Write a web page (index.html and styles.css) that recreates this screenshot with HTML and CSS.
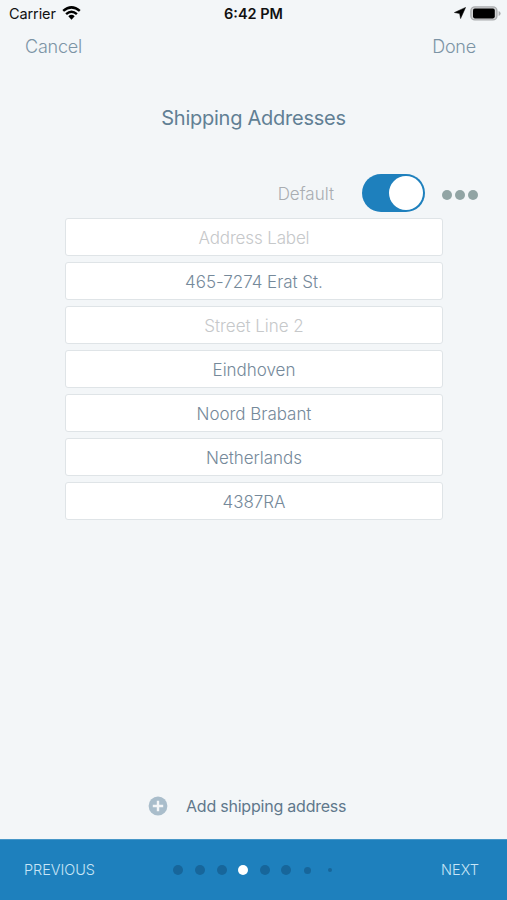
FILE: index.html
```html
<!DOCTYPE html>
<html lang="en">
<head>
<meta charset="utf-8">
<title>Shipping Addresses</title>
<link rel="stylesheet" href="styles.css">
</head>
<body>
<div class="screen">
  <div class="status">
    <div class="carrier"><span>Carrier</span>
      <svg width="19" height="14" viewBox="0 0 19 14"><g fill="none" stroke="#000" stroke-width="2.5"><path d="M1.2 4.9Q9.5-2.2 17.8 4.9"/><path d="M4.1 8.1Q9.5 3.4 14.9 8.1"/></g><path d="M6.3 10.2Q9.5 7.4 12.7 10.2L9.5 13.7Z"/></svg>
    </div>
    <div class="time">6:42 PM</div>
    <div class="indicators">
      <svg width="12" height="12" viewBox="0 0 12 12"><path d="M11.6.4 6.6 11.6 5.6 6.5.4 5.5Z" stroke="#000" stroke-width=".5" stroke-linejoin="round"/></svg>
      <svg width="31" height="15" viewBox="0 0 31 15"><rect x=".9" y=".9" width="26" height="13" rx="4" fill="#d0d1d2" stroke="#aaacae" stroke-width="1.4"/><rect x="3" y="2.6" width="21.8" height="9.8" rx="1.8"/><path d="M28.6 5Q30.6 5.7 30.6 7.5T28.6 10Z" fill="#aaacae"/></svg>
    </div>
  </div>
  <nav class="nav"><span class="cancel">Cancel</span><span class="done">Done</span></nav>
  <h1 class="title">Shipping Addresses</h1>
  <div class="default-row">
    <span class="default-label">Default</span>
    <div class="toggle"><i class="knob"></i></div>
    <div class="more"><i></i><i></i><i></i></div>
  </div>
  <div class="fields">
    <div class="field placeholder"><span class="label-text">Address Label</span></div>
    <div class="field"><span class="street">465-7274 Erat St.</span></div>
    <div class="field placeholder"><span class="line-two">Street Line 2</span></div>
    <div class="field"><span class="city">Eindhoven</span></div>
    <div class="field"><span class="region">Noord Brabant</span></div>
    <div class="field"><span class="country">Netherlands</span></div>
    <div class="field"><span class="postcode">4387RA</span></div>
  </div>
  <div class="add">
    <svg width="20" height="20" viewBox="0 0 20 20"><circle cx="10" cy="10" r="9.4" fill="#a9bdcb"/><path d="M10 4.8v10.4M4.8 10h10.4" stroke="#f4f6f8" stroke-width="2.4"/></svg>
    <span>Add shipping address</span>
  </div>
  <footer class="footer">
    <span class="previous">PREVIOUS</span>
    <div class="dots"><i></i><i></i><i></i><i class="active"></i><i></i><i></i><i class="small"></i><i class="tiny"></i></div>
    <span class="next">NEXT</span>
  </footer>
</div>
</body>
</html>
```
FILE: styles.css
```css
* { box-sizing: border-box; }
body { margin: 0; font-family: Inter, "Liberation Sans", sans-serif; background: #f3f6f8; }
svg { display: block; flex: none; }
.screen { width: 507px; height: 900px; display: flex; flex-direction: column; white-space: nowrap; overflow: hidden; }
.status { height: 28px; display: grid; grid-template-columns: 1fr auto 1fr; align-items: center; padding: 0 6px 2px 9px; color: #111; font-size: 14.5px; }
.carrier { display: flex; align-items: center; gap: 6px; letter-spacing: -.1px; }
.time { font-weight: 600; font-size: 14.5px; margin-right: 3px; }
.indicators { display: flex; align-items: center; justify-content: flex-end; gap: 4px; }
.nav { height: 37px; display: flex; align-items: center; justify-content: space-between; padding: 0 31px 0 25px; color: #7c94a5; font-size: 18px; font-weight: 300; letter-spacing: -.2px; }
.title { margin: 40px 0 0; height: 26px; line-height: 26px; text-align: center; font-size: 20px; font-weight: 400; letter-spacing: -.25px; color: #617f94; }
.default-row { margin-top: 43px; height: 38px; display: flex; align-items: center; justify-content: flex-end; padding-right: 29px; }
.default-label { color: #a9adb1; font-size: 17px; font-weight: 300; margin: 2px 28px 0 0; }
.toggle { width: 63px; height: 38px; border-radius: 19px; background: #1e80bd; display: flex; align-items: center; justify-content: flex-end; padding-right: 2px; }
.knob { width: 34px; height: 34px; border-radius: 50%; background: #fff; }
.more { display: flex; gap: 3px; margin: 3px 0 0 17px; }
.more i { width: 10px; height: 10px; border-radius: 50%; background: #91a4a4; }
.fields { width: 378px; margin: 6px 0 0 65px; display: flex; flex-direction: column; gap: 6px; }
.field { height: 38px; display: flex; align-items: center; justify-content: center; padding-top: 1px; border: 1px solid #dfe4e7; border-radius: 3px; background: #fff; color: #75899a; font-size: 17px; font-weight: 300; letter-spacing: -.03px; }
.placeholder { color: #c6c8ca; }
.label-text { letter-spacing: -.15px; }
.add { margin-top: auto; height: 26px; display: flex; align-items: center; padding-left: 148px; gap: 18px; color: #5f788c; font-size: 16px; letter-spacing: -.22px; margin-bottom: 20px; }
.footer { height: 61px; flex: none; display: grid; grid-template-columns: 1fr 160px 1fr; align-items: center; padding: 0 28px 0 24px; background: #1e80bd; border-top: 1px solid #4797c8; color: #c8e5f6; font-size: 14.5px; font-weight: 300; }
.previous, .next { padding-bottom: 2px; }
.previous { letter-spacing: -.05px; }
.next { text-align: right; }
.dots { display: grid; grid-template-columns: repeat(8, 21.6px); align-items: center; justify-items: center; justify-content: center; padding-left: 5px; }
.dots i { width: 10px; height: 10px; border-radius: 50%; background: #17669b; }
.dots .active { background: #fff; }
.dots .small { width: 7px; height: 7px; }
.dots .tiny { width: 4px; height: 4px; }
```
